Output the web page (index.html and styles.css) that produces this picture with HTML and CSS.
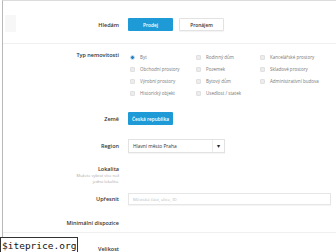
FILE: index.html
```html
<!DOCTYPE html>
<html lang="cs">
<head>
    <meta charset="UTF-8">
    <meta name="viewport" content="width=device-width, initial-scale=1.0">
    <title>Hledání nemovitostí</title>
    <link rel="stylesheet" href="styles.css">
</head>
<body>
    <div class="page">
        <div class="section search">
            <div class="row">
                <div class="label with-tab"><span class="tab"></span><span>Hledám</span></div>
                <div class="control buttons">
                    <button class="btn btn-blue">Prodej</button>
                    <button class="btn btn-white">Pronájem</button>
                </div>
            </div>
        </div>

        <div class="section filters">
            <div class="row row-top">
                <div class="label">Typ nemovitosti</div>
                <div class="control types">
                    <label class="opt"><span class="radio on"></span>Byt</label>
                    <label class="opt"><span class="box"></span>Rodinný dům</label>
                    <label class="opt"><span class="box"></span>Kancelářské prostory</label>
                    <label class="opt"><span class="box"></span>Obchodní prostory</label>
                    <label class="opt"><span class="box"></span>Pozemek</label>
                    <label class="opt"><span class="box"></span>Skladové prostory</label>
                    <label class="opt"><span class="box"></span>Výrobní prostory</label>
                    <label class="opt"><span class="box"></span>Bytový dům</label>
                    <label class="opt"><span class="box"></span>Administrativní budova</label>
                    <label class="opt"><span class="box"></span>Historický objekt</label>
                    <label class="opt"><span class="box"></span>Usedlost / statek</label>
                </div>
            </div>

            <div class="row row-country">
                <div class="label">Země</div>
                <div class="control"><button class="btn btn-blue">Česká republika</button></div>
            </div>

            <div class="row row-region">
                <div class="label">Region</div>
                <div class="control">
                    <div class="select">
                        <span class="select-text">Hlavní město Praha</span>
                        <span class="select-arrow">▾</span>
                    </div>
                </div>
            </div>

            <div class="row row-locality">
                <div class="label">
                    Lokalita
                    <div class="hint">Můžete vybrat více než<br>jednu lokalitu.</div>
                </div>
                <div class="control"></div>
            </div>

            <div class="row row-refine">
                <div class="label">Upřesnit</div>
                <div class="control"><input class="text-input" type="text" placeholder="Městská část, ulice, ID"></div>
            </div>

            <div class="row row-layout">
                <div class="label">Minimální dispozice</div>
                <div class="control"></div>
            </div>
        </div>

        <div class="section size">
            <div class="row">
                <div class="label">Velikost</div>
                <div class="control"></div>
            </div>
        </div>
    </div>
    <div class="watermark">$iteprice.org</div>
</body>
</html>
```

FILE: styles.css
```css
body { margin: 0; font-family: "Open Sans", Arial, sans-serif; background: #fff; color: #333; overflow: hidden; height: 252px; }
.page { margin-left: 2px; border-left: 1px solid #b8b8b8; border-top: 1px solid #dcdcdc; min-height: 260px; }

.section { border-bottom: 1px solid #efefef; }
.search { padding: 17px 0 12px; }
.filters { padding: 7px 0 5px; }
.size { padding: 12px 0; border-bottom: none; }

.row { display: grid; grid-template-columns: 116px 1fr; column-gap: 9px; align-items: center; }
.row-top { align-items: start; }
.row-country { margin-top: 13px; }
.row-region { margin-top: 14px; }
.row-locality { margin-top: 12px; align-items: start; }
.row-refine { margin-top: 9px; }
.row-layout { margin-top: 14px; height: 8px; }

.label { text-align: right; font-size: 5.5px; font-weight: 600; color: #333; line-height: 8px; }
.with-tab { display: flex; justify-content: space-between; align-items: center; }
.tab { display: block; width: 11px; height: 17px; margin: -3px 0 -1px 2px; background: #f7f7f7; }
.hint { font-size: 4px; font-weight: 400; color: #aaa; line-height: 5.5px; }

.control { display: flex; align-items: center; font-size: 5px; }
.buttons { gap: 6px; }
.btn { height: 13px; width: 45px; padding: 0; border-radius: 1px; font-family: inherit; font-size: 4.8px; font-weight: 600; cursor: pointer; }
.btn-blue { background: #1e9bd7; color: #fff; border: none; }
.btn-white { background: #fff; color: #333; border: 1px solid #e2e2e2; box-shadow: 0 1px 1px rgba(0,0,0,0.05); }

.types { display: grid; grid-template-columns: 66px 64px 1fr; grid-auto-rows: 12px; align-items: center; padding-left: 2px; }
.opt { display: flex; align-items: center; gap: 5px; font-size: 4.5px; line-height: 6px; color: #777; }
.box { width: 5px; height: 5px; background: #ececec; border: 1px solid #e0e0e0; border-radius: 1px; box-sizing: border-box; }
.radio { width: 5px; height: 5px; border-radius: 50%; box-sizing: border-box; background: #cfe6f3; }
.radio.on { background: #2a7fb8; border: 1px solid #cfe6f3; }

.select { width: 97px; height: 14px; box-sizing: border-box; border: 1px solid #e2e2e2; display: flex; align-items: center; box-shadow: 0 1px 1px rgba(0,0,0,0.04); }
.select-text { flex: 1; padding-left: 4px; font-size: 4.8px; color: #333; }
.select-arrow { width: 11px; height: 100%; border-left: 1px solid #ececec; display: flex; align-items: center; justify-content: center; font-size: 6px; color: #222; }

.text-input { width: 203px; height: 12px; box-sizing: border-box; border: 1px solid #e6e6e6; padding: 0 4px; font-family: inherit; font-size: 4.3px; outline: none; box-shadow: 0 1px 1px rgba(0,0,0,0.04); }
.text-input::placeholder { color: #bbb; }

.watermark { position: absolute; left: 0; top: 237px; padding: 0 1px; background: #fff; border: 1px solid #333; font-family: "DejaVu Sans Mono", monospace; font-size: 9.5px; line-height: 16px; color: #111; }
```
